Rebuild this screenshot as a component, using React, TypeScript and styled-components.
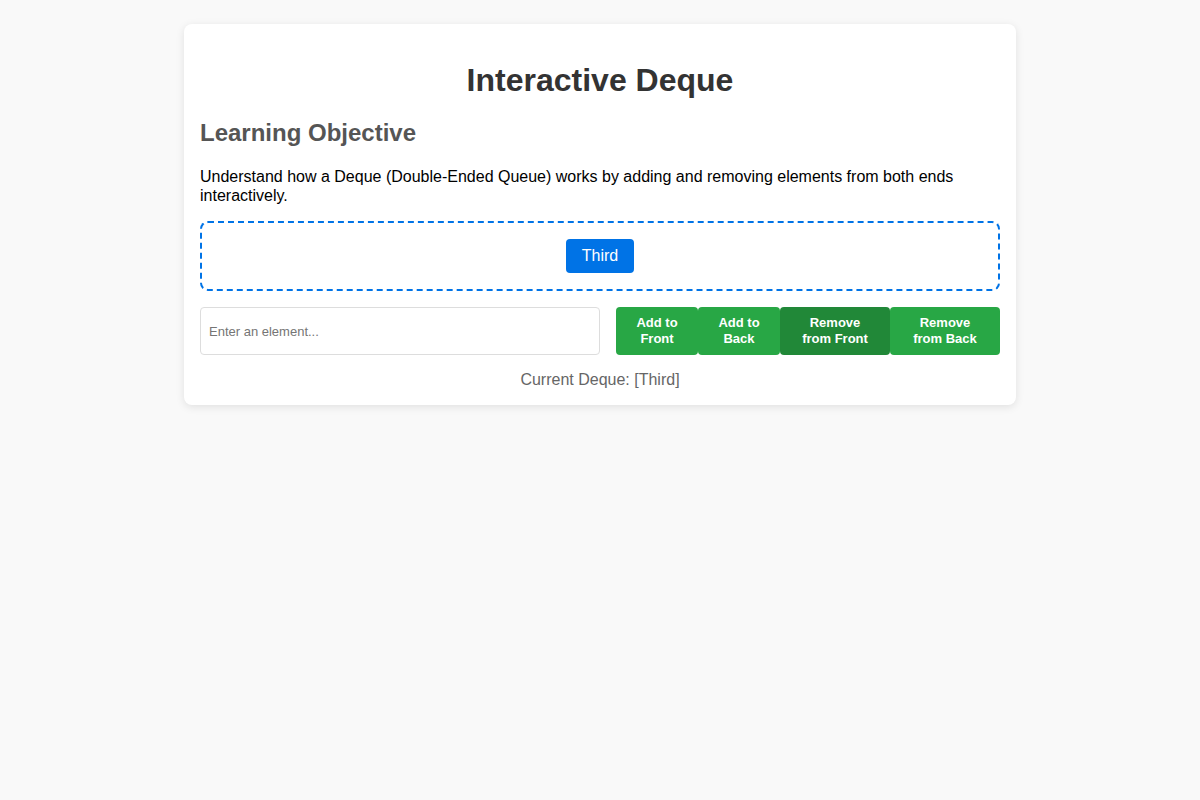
import React, { useState } from "react";
import styled, { createGlobalStyle } from "styled-components";

const Global = createGlobalStyle`
  body {
    margin: 0;
    padding: 24px 0;
    background: #f9f9f9;
    font-family: "Liberation Sans", Arial, sans-serif;
  }
`;

const Card = styled.div`
  width: 800px;
  margin: 0 auto;
  padding: 0 16px 16px;
  background: #fff;
  border-radius: 8px;
  box-shadow: 0 2px 8px rgba(0, 0, 0, 0.1);
  display: flow-root;
`;

const Title = styled.h1`
  font-size: 32px;
  color: #333;
  text-align: center;
  margin: 38px 0 20px;
`;

const Subtitle = styled.h2`
  font-size: 24px;
  color: #555;
  margin: 0 0 20px;
`;

const Text = styled.p`
  font-size: 16px;
  line-height: 19px;
  color: #000;
  margin: 0 0 16px;
`;

const DequeBox = styled.div`
  border: 2px dashed #0073e6;
  border-radius: 8px;
  padding: 16px;
  display: flex;
  justify-content: center;
  gap: 8px;
  min-height: 34px;
`;

const Item = styled.div`
  background: #0073e6;
  color: #fff;
  font-size: 16px;
  padding: 8px 16px;
  border-radius: 4px;
`;

const Controls = styled.div`
  display: flex;
  gap: 16px;
  margin-top: 16px;
`;

const Input = styled.input`
  flex: 0 0 400px;
  box-sizing: border-box;
  padding: 8px;
  border: 1px solid #ddd;
  border-radius: 4px;
  font-family: "Liberation Sans", Arial, sans-serif;
  font-size: 13px;
  &::placeholder {
    color: #757575;
  }
`;

const Buttons = styled.div`
  display: flex;
  flex: 1;
  min-width: 0;
`;

const Button = styled.button<{ $active?: boolean; $w: number }>`
  flex: 0 0 ${(p) => p.$w}px;
  padding: 8px 4px;
  border: none;
  border-radius: 4px;
  background: ${(p) => (p.$active ? "#218838" : "#28a745")};
  color: #fff;
  font-family: "Liberation Sans", Arial, sans-serif;
  font-size: 13px;
  font-weight: bold;
  line-height: 16px;
  cursor: pointer;
`;

const Status = styled.div`
  margin-top: 16px;
  text-align: center;
  color: #666;
  font-size: 16px;
`;

export default function App() {
  const [items, setItems] = useState<string[]>(["Third"]);
  const [value, setValue] = useState("");

  const addFront = () => {
    if (!value.trim()) return;
    setItems([value.trim(), ...items]);
    setValue("");
  };
  const addBack = () => {
    if (!value.trim()) return;
    setItems([...items, value.trim()]);
    setValue("");
  };

  return (
    <>
      <Global />
      <Card>
        <Title>Interactive Deque</Title>
        <Subtitle>Learning Objective</Subtitle>
        <Text>
          Understand how a Deque (Double-Ended Queue) works by adding and removing elements from both ends
          interactively.
        </Text>
        <DequeBox>
          {items.map((it, i) => (
            <Item key={i}>{it}</Item>
          ))}
        </DequeBox>
        <Controls>
          <Input
            placeholder="Enter an element..."
            value={value}
            onChange={(e) => setValue(e.target.value)}
          />
          <Buttons>
            <Button $w={82} onClick={addFront}>
              Add to
              <br />
              Front
            </Button>
            <Button $w={82} onClick={addBack}>
              Add to
              <br />
              Back
            </Button>
            <Button $w={110} $active onClick={() => setItems(items.slice(1))}>
              Remove
              <br />
              from Front
            </Button>
            <Button $w={110} onClick={() => setItems(items.slice(0, -1))}>
              Remove
              <br />
              from Back
            </Button>
          </Buttons>
        </Controls>
        <Status>Current Deque: [{items.join(", ")}]</Status>
      </Card>
    </>
  );
}
